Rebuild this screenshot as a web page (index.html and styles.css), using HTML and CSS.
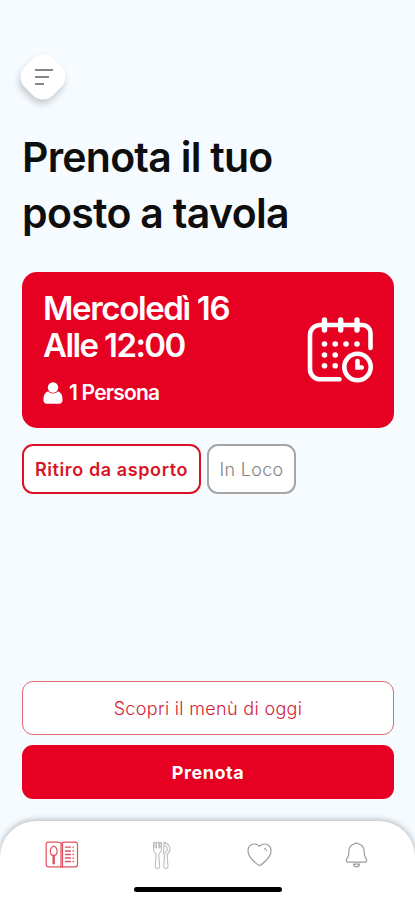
FILE: index.html
```html
<!DOCTYPE html>
<html lang="it">
<head>
<meta charset="utf-8">
<meta name="viewport" content="width=device-width, initial-scale=1">
<title>Prenota il tuo posto a tavola</title>
<link rel="stylesheet" href="styles.css">
</head>
<body>
<div class="app">
  <main class="content">
    <button class="menu" aria-label="Menu">
      <svg width="20" height="18" viewBox="0 0 20 18" fill="none" stroke="#858585" stroke-width="2">
        <path d="M2 2h18M2 9h14M2 16h9"/>
      </svg>
    </button>
    <h1 class="title"><span class="title-a">Prenota il tuo</span><br><span class="title-b">posto a tavola</span></h1>
    <section class="booking">
      <div class="booking-info">
        <div class="when"><span class="when-day">Mercoledì 16</span><br><span class="when-hour">Alle 12:00</span></div>
        <div class="people">
          <svg width="20" height="22" viewBox="0 0 20 22" fill="#fff">
            <circle cx="10" cy="5.5" r="5.2"/>
            <path d="M5 9.300C2 10.500.5 13 .5 17v1.500c0 2 1.200 3.200 3.200 3.200h12.600c2 0 3.200-1.200 3.200-3.200V17c0-4-1.500-6.500-4.500-7.700-2.700 3-7.300 3-10 0z"/>
          </svg>
          <span>1 Persona</span>
        </div>
      </div>
      <svg class="calendar" width="68" height="66" viewBox="0 0 68 66" fill="none" stroke="#fff" stroke-width="4.600" stroke-linecap="round">
        <path d="M32.500 62.300H13a10 10 0 0 1-10-10V18A10 10 0 0 1 13 8h42.500a8 8 0 0 1 8 8v15"/>
        <path d="M17.500 3v10M33.700 3v10M50 3v10" stroke-width="5.400"/>
        <circle cx="50.500" cy="50" r="13.200"/>
        <path d="M50.500 44v6.500h4.200" stroke-width="4.600"/>
        <g fill="#fff" stroke="none">
          <circle cx="17.500" cy="27" r="2.800"/><circle cx="28.200" cy="27" r="2.800"/><circle cx="39" cy="27" r="2.800"/><circle cx="50" cy="27" r="2.800"/>
          <circle cx="17.500" cy="38" r="2.800"/><circle cx="28.200" cy="38" r="2.800"/>
          <circle cx="17.500" cy="48.800" r="2.800"/><circle cx="28.200" cy="48.800" r="2.800"/>
        </g>
      </svg>
    </section>
    <div class="options">
      <button class="option option-on">Ritiro da asporto</button>
      <button class="option option-off">In Loco</button>
    </div>
    <div class="actions">
      <button class="action action-menu">Scopri il menù di oggi</button>
      <button class="action action-book">Prenota</button>
    </div>
  </main>
  <nav class="tabs">
    <div class="tab-row">
      <a class="tab"><svg width="34" height="28" viewBox="0 0 34 28" fill="none" stroke="#df5260" stroke-width="1.200" stroke-linecap="round">
        <path d="M16.500 2.500C15.500 1.300 14 1.200 12 1.200H3.500Q1.200 1.200 1.200 3.500v20q0 2.300 2.300 2.300H15q1.500 0 1.500 1 0-1 1.500-1h12.200q2.300 0 2.300-2.300v-20q0-2.300-2.300-2.300H20q-2.800 0-3.500 1.300zM16 2.500v23.800M17.500 2.500v23.800"/>
        <path d="M8.700 5C6.500 6 5.300 8.300 5.300 10.500s1.300 3.800 3.400 4.300c2.100-.5 3.400-2.100 3.400-4.300S10.900 6 8.700 5z"/>
        <path d="M8.700 14.800v7.500" stroke-width="2.400"/>
        <path d="M20.500 6.200h8M20.500 10h8M20.500 13.500h8M20.500 17h8M20.500 20.500h8" stroke-width="1.300" stroke-dasharray="5 2.500"/>
      </svg></a>
      <a class="tab"><svg width="20" height="29" viewBox="0 0 20 29" fill="none" stroke="#bdbdbd" stroke-width="1.100" stroke-linejoin="round">
        <path d="M1.500 1.500v7c0 2 1 3.200 2.500 4V17l-.7 8c-.2 3.500 4.500 3.500 4.300 0L7 17v-4.500c1.500-.8 2.500-2 2.500-4v-7L8 1.300v5.500H6.800V1.300H4.500v5.500H3V1.300z"/>
        <path d="M12 1.200c3.500 1.300 6 4.200 6 6.800s-1.500 4-3 5.800l1 11.200c.2 3.500-4.500 3.500-4.300 0L12.500 15 11.700 12zM13 4.500c2 1.300 2.700 3 2 5l-2 3"/>
      </svg></a>
      <a class="tab"><svg width="25" height="24" viewBox="0 0 25 24" fill="none" stroke="#9d9d9d" stroke-width="1.200" stroke-linecap="round" stroke-linejoin="round">
        <path d="M12.500 3.200C10.500 1.300 8.800 1 7 1 3.500 1 1 4 1 7.500c0 4 1.500 6.500 4.500 9.500 2.200 2.200 4.500 4.500 7 5.500 2.500-1 4.800-3.300 7-5.500 3-3 4.500-5.500 4.500-9.500C24 4 21.500 1 18 1c-1.800 0-3.500.3-5.500 2.200z"/>
        <path d="M17.500 5.500c1 .2 1.600.8 1.800 2"/>
      </svg></a>
      <a class="tab"><svg width="23" height="26" viewBox="0 0 23 26" fill="none" stroke="#9d9d9d" stroke-width="1.200" stroke-linecap="round" stroke-linejoin="round">
        <path d="M9 2.200C10 .7 13 .7 14 2.200 17.500 3 19 6 19.200 9.500l.3 4 2 4c.5 1.500 0 2.700-1.700 2.700H3.200c-1.700 0-2.200-1.200-1.700-2.700l2-4 .3-4C4 6 5.500 3 9 2.200z"/>
        <path d="M8.500 22.200c.3 3.600 5.700 3.600 6 0z"/>
      </svg></a>
    </div>
    <div class="home-bar"></div>
  </nav>
</div>
</body>
</html>
```
FILE: styles.css
```css
* { box-sizing: border-box; }
body {
  margin: 0;
  background: #f6fbff;
  font-family: "Inter", "Liberation Sans", sans-serif;
}
button { font-family: inherit; cursor: pointer; padding: 0; }
svg { display: block; flex: none; }
.app {
  height: 900px;
  display: flex;
  flex-direction: column;
  overflow: hidden;
}
.content {
  flex: 1;
  display: flex;
  flex-direction: column;
  padding: 57px 21px 22px 22px;
}
.menu {
  width: 40px;
  height: 40px;
  margin-left: 1px;
  border: 0;
  border-radius: 14px;
  background: #fff;
  transform: rotate(45deg);
  box-shadow: 2px 4px 7px rgba(0, 0, 0, .2);
  display: grid;
  place-items: center;
}
.menu svg { transform: rotate(-45deg); }
.title {
  margin: 32px 0 0;
  font-size: 41px;
  line-height: 56px;
  font-weight: 600;
  color: #0e0e0e;
  white-space: nowrap;
}
.title-a { letter-spacing: -.75px; }
.title-b { letter-spacing: -.68px; }
.booking {
  height: 156px;
  margin-top: 31px;
  padding: 18px 19px 0 21px;
  border-radius: 15px;
  background: #e60021;
  color: #fff;
  display: flex;
  justify-content: space-between;
}
.when {
  font-size: 33px;
  line-height: 37px;
  font-weight: 600;
  white-space: nowrap;
}
.when-day { letter-spacing: -1.350px; }
.when-hour { letter-spacing: -1.600px; }
.people {
  margin-top: 18px;
  display: flex;
  align-items: center;
  gap: 6px;
  font-size: 21px;
  line-height: 22px;
  font-weight: 600;
  letter-spacing: -.8px;
}
.calendar { margin-top: 27px; }
.options {
  margin-top: 16px;
  display: flex;
  gap: 6px;
}
.option {
  height: 50px;
  border-radius: 11px;
  background: #fff;
  font-size: 18px;
  white-space: nowrap;
}
.option-on {
  width: 179px;
  border: 2px solid #d81425;
  color: #d81425;
  font-weight: 600;
  letter-spacing: .6px;
}
.option-off {
  width: 89px;
  border: 2px solid #a5a5a5;
  color: #858585;
  font-weight: 300;
  letter-spacing: .3px;
}
.actions {
  margin-top: auto;
  display: grid;
  gap: 10px;
}
.action {
  height: 54px;
  border-radius: 11px;
  font-size: 18px;
}
.action-menu {
  border: 1px solid #e06a74;
  background: #fff;
  color: #d32236;
  font-weight: 300;
  letter-spacing: .33px;
}
.action-book {
  border: 0;
  background: #e60021;
  color: #fff;
  font-weight: 700;
  letter-spacing: .55px;
}
.tabs {
  height: 79px;
  border-radius: 36px 36px 0 0;
  background: #fff;
  box-shadow: 0 -1px 6px rgba(0, 0, 0, .3);
  display: flex;
  flex-direction: column;
  align-items: center;
}
.tab-row {
  width: 100%;
  height: 66px;
  padding: 2px 9px 0 13px;
  display: grid;
  grid-template-columns: 98px 101px 95px 1fr;
}
.tab { display: grid; place-items: center; }
.home-bar {
  width: 148px;
  height: 5px;
  border-radius: 3px;
  background: #000;
}
```
